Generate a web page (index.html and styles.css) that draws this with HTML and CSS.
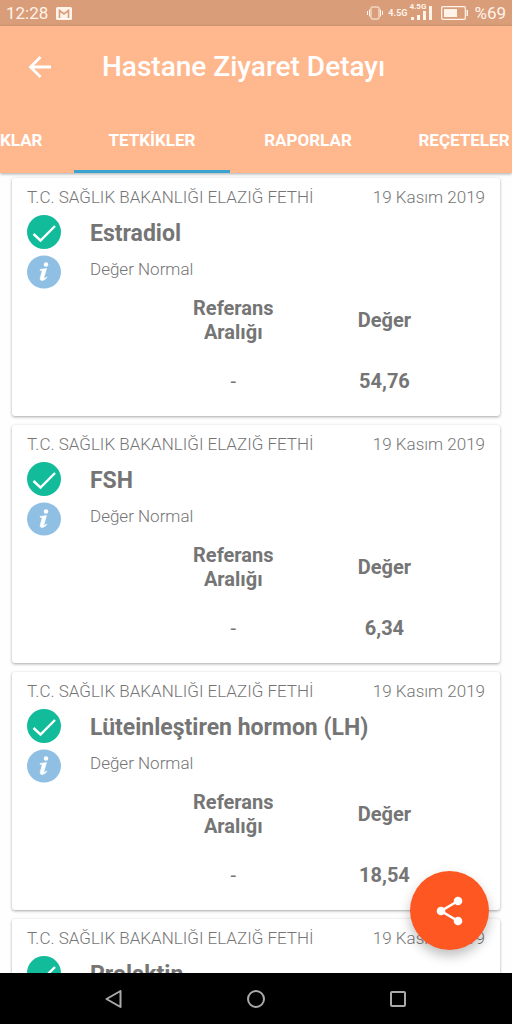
FILE: index.html
```html
<!DOCTYPE html>
<html lang="tr">
<head>
<meta charset="utf-8">
<meta name="viewport" content="width=device-width, initial-scale=1">
<title>Hastane Ziyaret Detayı</title>
<link rel="stylesheet" href="styles.css">
</head>
<body>
<svg class="symbols" aria-hidden="true">
  <symbol id="check" viewBox="0 0 34 34">
    <circle cx="17" cy="17" r="17" fill="#12bc9b"/>
    <path d="M6.500 19l7 6.500L28 11" fill="none" stroke="#fff" stroke-width="2.400"/>
  </symbol>
  <symbol id="info" viewBox="0 0 34 34">
    <ellipse cx="17" cy="17" rx="17" ry="16.500" fill="#90bfe4"/>
    <circle cx="19" cy="9.500" r="2.200" fill="#fff"/>
    <path d="M13 14.500l6.500-1-2.600 9.200c-.3 1.200.6 1 2.300-.7l.7.6c-3.600 4.200-7.600 3.600-6.600.1l1.700-6.200c.3-1-.3-1.200-2-1.200z" fill="#fff" stroke="#fff" stroke-width=".6"/>
  </symbol>
</svg>
<div class="screen">
  <div class="status">
    <span>12:28</span>
    <svg class="mail" width="16" height="13" viewBox="0 0 16 13"><rect width="16" height="13" rx="1.500" fill="#fff3ea"/><path d="M3.500 11V3.500L8 7l4.500-3.500V11" fill="none" stroke="#d99d79" stroke-width="1.600"/></svg>
    <svg class="vibrate" width="16" height="14" viewBox="0 0 16 14" fill="none" stroke="#fff3ea"><rect x="4" y="1" width="8" height="12" rx="1"/><path d="M2.500 3.500v7M.5 5v4M13.500 3.500v7M15.500 5v4"/></svg>
    <span class="net">4.5G</span>
    <span class="signal"><span class="net-small">4.5G</span><svg width="22" height="14" viewBox="0 0 22 14" fill="#fff3ea"><path d="M1 11h3v3H1zM7 9h3v5H7zM13 5h3v9h-3zM19 0h3v14h-3z"/></svg></span>
    <svg class="battery" width="27" height="14" viewBox="0 0 27 14"><rect x=".7" y=".7" width="23.600" height="12.600" rx="1" fill="none" stroke="#fff3ea" stroke-width="1.200"/><path d="M3 3h13v8H3zM25.500 4H27v6h-1.500z" fill="#fff3ea"/></svg>
    <span>%69</span>
  </div>
  <header class="header">
    <div class="appbar">
      <button class="back" aria-label="Geri"><svg width="24" height="22" viewBox="0 0 24 22" fill="none" stroke="#fff" stroke-width="2.800"><path d="M23 11H3M12.500 1L2.500 11l10 10"/></svg></button>
      <h1 class="title">Hastane Ziyaret Detayı</h1>
    </div>
    <nav class="tabs">
      <a class="tab tab-cut" href="#">KLAR</a>
      <a class="tab tab-active" href="#">TETKİKLER</a>
      <a class="tab" href="#">RAPORLAR</a>
      <a class="tab" href="#">REÇETELER</a>
    </nav>
  </header>
  <main class="list">
    <article class="card">
      <div class="meta"><span>T.C. SAĞLIK BAKANLIĞI ELAZIĞ FETHİ</span><time>19 Kasım 2019</time></div>
      <div class="row"><svg class="mark"><use href="#check"/></svg><h2 class="name">Estradiol</h2></div>
      <div class="row"><svg class="mark"><use href="#info"/></svg><p class="note">Değer Normal</p></div>
      <table class="values"><thead><tr><th>Referans Aralığı</th><th>Değer</th></tr></thead><tbody><tr><td>-</td><td>54,76</td></tr></tbody></table>
    </article>
    <article class="card">
      <div class="meta"><span>T.C. SAĞLIK BAKANLIĞI ELAZIĞ FETHİ</span><time>19 Kasım 2019</time></div>
      <div class="row"><svg class="mark"><use href="#check"/></svg><h2 class="name">FSH</h2></div>
      <div class="row"><svg class="mark"><use href="#info"/></svg><p class="note">Değer Normal</p></div>
      <table class="values"><thead><tr><th>Referans Aralığı</th><th>Değer</th></tr></thead><tbody><tr><td>-</td><td>6,34</td></tr></tbody></table>
    </article>
    <article class="card">
      <div class="meta"><span>T.C. SAĞLIK BAKANLIĞI ELAZIĞ FETHİ</span><time>19 Kasım 2019</time></div>
      <div class="row"><svg class="mark"><use href="#check"/></svg><h2 class="name">Lüteinleştiren hormon (LH)</h2></div>
      <div class="row"><svg class="mark"><use href="#info"/></svg><p class="note">Değer Normal</p></div>
      <table class="values"><thead><tr><th>Referans Aralığı</th><th>Değer</th></tr></thead><tbody><tr><td>-</td><td>18,54</td></tr></tbody></table>
    </article>
    <article class="card">
      <div class="meta"><span>T.C. SAĞLIK BAKANLIĞI ELAZIĞ FETHİ</span><time>19 Kasım 2019</time></div>
      <div class="row"><svg class="mark"><use href="#check"/></svg><h2 class="name">Prolaktin</h2></div>
    </article>
  </main>
  <button class="share" aria-label="Paylaş"><svg width="28" height="30" viewBox="0 0 28 30"><path d="M22 5L5 15l17 10" fill="none" stroke="#fff" stroke-width="2.600"/><g fill="#fff"><circle cx="22" cy="5" r="4.300"/><circle cx="5" cy="15" r="4.300"/><circle cx="22" cy="25" r="4.300"/></g></svg></button>
  <nav class="navbar">
    <button aria-label="Geri"><svg width="18" height="18" viewBox="0 0 18 18"><path d="M15.500 1v16L1.500 9z"/></svg></button>
    <button aria-label="Ana ekran"><svg width="18" height="18" viewBox="0 0 18 18"><circle cx="9" cy="9" r="8"/></svg></button>
    <button aria-label="Son uygulamalar"><svg width="18" height="18" viewBox="0 0 18 18"><rect x="2" y="2" width="14" height="14" rx="1"/></svg></button>
  </nav>
</div>
</body>
</html>
```
FILE: styles.css
```css
* { box-sizing: border-box; }
body { margin: 0; font-family: Roboto, "Noto Sans", sans-serif; color: #757575; background: #fefefe; }
button { border: 0; padding: 0; background: none; }
h1, h2, p { margin: 0; }
svg { display: block; flex: none; }
.symbols { position: absolute; width: 0; height: 0; }
.screen { position: relative; display: flex; flex-direction: column; height: 100vh; overflow: hidden; }

.status { display: flex; align-items: center; flex: none; height: 26px; padding: 0 6px; background: #d99d79; color: #fff3ea; font-size: 17px; line-height: 26px; }
.mail { margin-left: 8px; }
.vibrate { margin-left: auto; }
.net { margin-left: 5px; font-family: "Liberation Sans Narrow", Roboto, sans-serif; font-size: 9px; font-weight: 700; }
.signal { position: relative; margin-left: 3px; }
.net-small { position: absolute; top: -3px; left: -1px; font-size: 8px; line-height: 8px; font-weight: 700; }
.battery { margin: 0 6px 0 9px; }

.header { position: relative; z-index: 1; flex: none; background: #ffb78e; color: #fff; box-shadow: 0 1px 3px rgba(0, 0, 0, .35); }
.appbar { display: flex; align-items: center; height: 81px; padding: 0 28px; gap: 50px; }
.title { font-size: 28px; line-height: 36px; font-weight: 500; }
.tabs { display: flex; height: 66px; overflow: hidden; }
.tab { flex: none; width: 156px; color: #fff; font-size: 17px; line-height: 66px; font-weight: 700; text-align: center; text-decoration: none; }
.tab-cut { width: 74px; text-align: left; }
.tab-active { border-bottom: 3px solid #3ba3cf; }

.list { display: flex; flex-direction: column; gap: 9px; flex: 1; min-height: 0; padding: 5px 12px 0; overflow: hidden; }
.card { flex: none; padding: 7px 15px 12px; border-radius: 3px; background: #fff; box-shadow: 0 1px 3px rgba(0, 0, 0, .35); }
.meta { display: flex; justify-content: space-between; font-size: 17px; line-height: 24px; font-weight: 300; }
.row { display: flex; align-items: center; gap: 29px; height: 40px; padding-top: 6px; }
.mark { width: 34px; height: 34px; }
.name { padding-top: 3px; font-size: 23px; line-height: 32px; font-weight: 700; }
.note { padding-bottom: 6px; font-size: 17px; line-height: 24px; font-weight: 300; }
.values { width: 66%; margin: 1px 25px 0 auto; border-collapse: collapse; table-layout: fixed; font-size: 20px; line-height: 24px; text-align: center; }
.values th { height: 60px; padding: 0 20px; font-weight: 700; }
.values td { height: 54px; padding: 8px 0 0; font-weight: 700; }
.values td:first-child { font-weight: 400; }

.share { position: absolute; z-index: 2; right: 23px; bottom: 74px; display: flex; align-items: center; justify-content: center; width: 79px; height: 79px; border-radius: 50%; background: #ff5722; box-shadow: 0 6px 12px rgba(0, 0, 0, .25); }
.navbar { position: relative; z-index: 1; display: flex; align-items: center; justify-content: center; gap: 124px; flex: none; height: 51px; background: #000; }
.navbar svg { fill: none; stroke: #aaa; stroke-width: 2; stroke-linejoin: round; }
```
